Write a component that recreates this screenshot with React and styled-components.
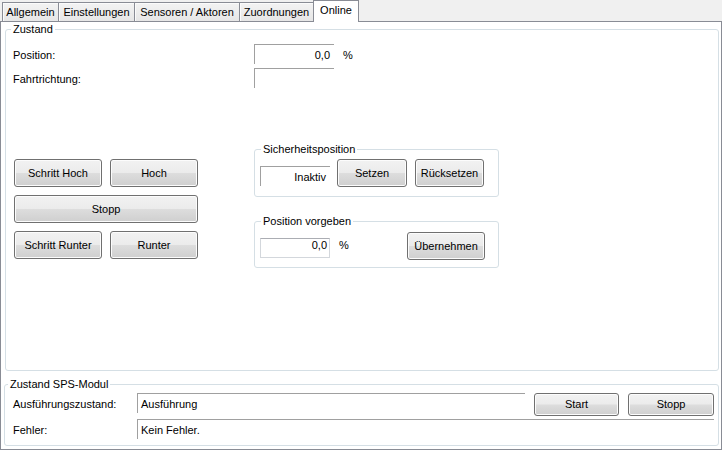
import React from 'react';
import styled, { createGlobalStyle } from 'styled-components';

const GlobalStyle = createGlobalStyle`
	html, body {
		margin: 0;
		padding: 0;
		background: #f0f0f0;
	}
	body {
		font-family: "Liberation Sans", Arial, sans-serif;
		font-size: 11px;
		line-height: 13px;
		color: #000;
	}
`;

const Window = styled.div`
	width: 722px;
	height: 450px;
	display: flex;
	flex-direction: column;
	background: #f0f0f0;
	overflow: hidden;
`;

const TabStrip = styled.div`
	display: flex;
	align-items: flex-end;
	height: 21px;
	padding-left: 2px;
	position: relative;
	z-index: 1;
`;

const Tab = styled.div`
	box-sizing: border-box;
	width: ${(p) => p.$w}px;
	height: ${(p) => (p.$active ? 22 : 19)}px;
	margin-left: ${(p) => (p.$first ? 0 : -1)}px;
	margin-bottom: ${(p) => (p.$active ? -1 : 0)}px;
	border: 1px solid #898c95;
	border-bottom: none;
	background: ${(p) => (p.$active ? '#fff' : 'linear-gradient(#f3f3f3, #e6e6e6)')};
	box-shadow: ${(p) => (p.$active ? 'none' : 'inset 1px 1px 0 #fbfbfb')};
	padding-top: 3px;
	text-align: center;
	white-space: nowrap;
	position: relative;
	z-index: ${(p) => (p.$active ? 2 : 1)};
`;

const Page = styled.div`
	box-sizing: border-box;
	height: 429px;
	border: 1px solid #898c95;
	background: #fff;
	padding: 7px 2px 3px 4px;
	display: flex;
	flex-direction: column;
`;

const GroupBox = styled.div`
	position: relative;
	box-sizing: border-box;
	height: ${(p) => p.$h}px;
	border: 1px solid #d5dfe5;
	border-radius: 3px;
	background: #fff;
`;

const Legend = styled.span`
	position: absolute;
	top: -7px;
	left: ${(p) => p.$inset}px;
	padding: 0 2px;
	background: #fff;
	white-space: nowrap;
`;

const StateGroup = styled(GroupBox)`
	padding: 14px 0 0 7px;
	margin-bottom: 13px;
`;

const PlcGroup = styled(GroupBox)`
	margin-left: -1px;
	padding: 8px 4px 0 8px;
`;

const Fields = styled.div`
	display: flex;
	flex-direction: column;
	gap: 4px;
`;

const FieldRow = styled.div`
	display: flex;
	align-items: flex-start;
	margin-top: ${(p) => p.$gap || 0}px;
`;

const FieldLabel = styled.div`
	width: ${(p) => p.$w}px;
	padding-top: 5px;
	white-space: nowrap;
`;

const ReadOnlyBox = styled.div`
	box-sizing: border-box;
	width: ${(p) => p.$w}px;
	height: 20px;
	margin-top: ${(p) => p.$top || 0}px;
	border-top: 1px solid #a0a0a0;
	border-left: 1px solid #a0a0a0;
	padding: 4px 4px 0 3px;
	text-align: ${(p) => (p.$right ? 'right' : 'left')};
	white-space: nowrap;
`;

const InputBox = styled.div`
	box-sizing: border-box;
	width: ${(p) => p.$w}px;
	height: 20px;
	margin-top: ${(p) => p.$top || 0}px;
	border: 1px solid #d3d7dc;
	border-top-color: #abadb3;
	padding: 0 2px;
	text-align: right;
`;

const Unit = styled.span`
	margin-left: 9px;
	padding-top: ${(p) => p.$top}px;
`;

const Controls = styled.div`
	display: flex;
	margin-top: 61px;
`;

const ButtonColumn = styled.div`
	width: 184px;
	margin-left: 1px;
	padding-top: 10px;
	display: flex;
	flex-direction: column;
	gap: 8px;
`;

const ButtonPair = styled.div`
	display: flex;
	gap: 8px;
`;

const Button = styled.button`
	box-sizing: border-box;
	width: ${(p) => p.$w}px;
	height: ${(p) => p.$h || 28}px;
	margin-left: ${(p) => p.$ml || 0}px;
	padding: 0;
	font: inherit;
	color: #000;
	border: 1px solid #707070;
	border-radius: 3px;
	background: linear-gradient(#f2f2f2 0%, #ebebeb 49%, #dddddd 51%, #cfcfcf 100%);
	box-shadow: inset 0 0 0 1px #fcfcfc;
	white-space: nowrap;
	flex-shrink: 0;
`;

const SideColumn = styled.div`
	width: 245px;
	margin-left: 56px;
	display: flex;
	flex-direction: column;
	gap: 24px;
`;

const SafetyGroup = styled(GroupBox)`
	display: flex;
	align-items: flex-start;
	padding: 9px 0 0 5px;
`;

const PresetGroup = styled(GroupBox)`
	display: flex;
	align-items: flex-start;
	padding: 10px 13px 0 5px;
`;

const Push = styled.div`
	flex: 1;
`;

const Spacer = styled.div`
	flex: 1;
`;

const tabs = [
	{ label: 'Allgemein', w: 57 },
	{ label: 'Einstellungen', w: 77 },
	{ label: 'Sensoren / Aktoren', w: 106 },
	{ label: 'Zuordnungen', w: 75 },
	{ label: 'Online', w: 46, active: true },
];

const App = () => {
	return (
		<Window>
			<GlobalStyle />
			<TabStrip>
				{tabs.map((t, i) => (
					<Tab key={t.label} $w={t.w} $first={i === 0} $active={t.active}>
						{t.label}
					</Tab>
				))}
			</TabStrip>
			<Page>
				<StateGroup $h={342}>
					<Legend $inset={5}>Zustand</Legend>
					<Fields>
						<FieldRow>
							<FieldLabel $w={241}>Position:</FieldLabel>
							<ReadOnlyBox $w={80} $right>0,0</ReadOnlyBox>
							<Unit $top={5}>%</Unit>
						</FieldRow>
						<FieldRow>
							<FieldLabel $w={241}>Fahrtrichtung:</FieldLabel>
							<ReadOnlyBox $w={80} />
						</FieldRow>
					</Fields>
					<Controls>
						<ButtonColumn>
							<ButtonPair>
								<Button $w={88}>Schritt Hoch</Button>
								<Button $w={88}>Hoch</Button>
							</ButtonPair>
							<Button $w={184}>Stopp</Button>
							<ButtonPair>
								<Button $w={88}>Schritt Runter</Button>
								<Button $w={88}>Runter</Button>
							</ButtonPair>
						</ButtonColumn>
						<SideColumn>
							<SafetyGroup $h={48}>
								<Legend $inset={6}>Sicherheitsposition</Legend>
								<ReadOnlyBox $w={70} $top={7} $right>Inaktiv</ReadOnlyBox>
								<Button $w={70} $ml={7}>Setzen</Button>
								<Button $w={69} $ml={8}>Rücksetzen</Button>
							</SafetyGroup>
							<PresetGroup $h={47}>
								<Legend $inset={6}>Position vorgeben</Legend>
								<InputBox $w={70} $top={6}>0,0</InputBox>
								<Unit $top={7}>%</Unit>
								<Push />
								<Button $w={78}>Übernehmen</Button>
							</PresetGroup>
						</SideColumn>
					</Controls>
					<Spacer />
				</StateGroup>
				<PlcGroup $h={62}>
					<Legend $inset={3}>Zustand SPS-Modul</Legend>
					<FieldRow>
						<FieldLabel $w={124}>Ausführungszustand:</FieldLabel>
						<ReadOnlyBox $w={388}>Ausführung</ReadOnlyBox>
						<Button $w={85} $h={23} $ml={9}>Start</Button>
						<Button $w={86} $h={23} $ml={9}>Stopp</Button>
					</FieldRow>
					<FieldRow $gap={3}>
						<FieldLabel $w={124}>Fehler:</FieldLabel>
						<ReadOnlyBox $w={577}>Kein Fehler.</ReadOnlyBox>
					</FieldRow>
				</PlcGroup>
			</Page>
		</Window>
	);
};

export default App;
